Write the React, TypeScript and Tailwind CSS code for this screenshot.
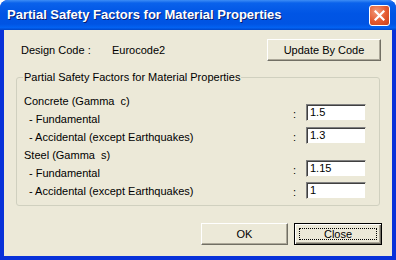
import React from "react";

const face = "font-['Liberation_Sans',Arial,sans-serif]";

function ClassicButton({
  label,
  width,
  isDefault,
}: {
  label: string;
  width: string;
  isDefault?: boolean;
}) {
  if (isDefault) {
    return (
      <button
        className={`${width} h-[22px] border border-black bg-[#ECE9D8] shadow-[inset_1px_1px_0_#fff,inset_-1px_-1px_0_#716F64,inset_-2px_-2px_0_#ACA899] p-[4px] flex`}
      >
        <span className="flex-1 border border-dotted border-black flex items-center justify-center text-[11px] leading-[12px] text-black">
          {label}
        </span>
      </button>
    );
  }
  return (
    <button
      className={`${width} h-[22px] bg-[#ECE9D8] border-t border-l border-white border-r border-b border-r-[#716F64] border-b-[#716F64] shadow-[inset_-1px_-1px_0_#ACA899] flex items-center justify-center text-[11px] leading-[12px] text-black`}
    >
      {label}
    </button>
  );
}

function ValueBox({ value }: { value: string }) {
  return (
    <div className="w-[60px] h-[17px] bg-white border-t border-l border-[#808080] border-r border-b border-r-[#ECE9D8] border-b-[#ECE9D8] shadow-[inset_1px_1px_0_#404040] pl-[3px] text-[11px] leading-[15px] text-black">
      {value}
    </div>
  );
}

function FieldRow({ value, className }: { value: string; className?: string }) {
  return (
    <div className={`flex items-center ${className ?? ""}`}>
      <span className="w-[13px] pt-[3px] text-[11px] leading-[13px] text-black">:</span>
      <ValueBox value={value} />
    </div>
  );
}

export default function App() {
  return (
    <div className={`w-[396px] h-[260px] bg-[#0831D9] rounded-t-[8px] flex flex-col overflow-hidden ${face}`}>
      {/* title bar */}
      <div className="h-[30px] shrink-0 flex items-center justify-between pl-[7px] pr-[6px] bg-[linear-gradient(to_bottom,#3D8DF5_0%,#0A62EB_10%,#0055E5_45%,#0054E3_80%,#0262F2_92%,#0046C8_100%)]">
        <span className="text-white font-bold text-[13px] leading-[16px] [text-shadow:1px_1px_0_#0A1E6E]">
          Partial Safety Factors for Material Properties
        </span>
        <button className="w-[21px] h-[21px] rounded-[3px] border border-white bg-[radial-gradient(circle_at_35%_30%,#F29A7A_0%,#E4592F_55%,#C6401A_100%)] flex items-center justify-center">
          <svg width="11" height="11" viewBox="0 0 11 11">
            <path d="M1.5 1.5 L9.5 9.5 M9.5 1.5 L1.5 9.5" stroke="#fff" strokeWidth="2.2" strokeLinecap="square" />
          </svg>
        </button>
      </div>

      {/* client area */}
      <div className="flex-1 mx-[4px] mb-[4px] bg-[#ECE9D8] flex flex-col pt-[9px] text-black">
        <div className="flex items-center h-[22px] pl-[17px] pr-[11px]">
          <span className="w-[91px] text-[11px] leading-[13px]">Design Code :</span>
          <span className="text-[11px] leading-[13px]">Eurocode2</span>
          <div className="ml-auto">
            <ClassicButton label="Update By Code" width="w-[114px]" />
          </div>
        </div>

        <fieldset className="mx-[12px] mt-[10px] h-[135px] border border-[#D0D0BF] rounded-[3px] px-[6px] pb-[7px]">
          <legend className="px-[1px] text-[11px] leading-[13px]">
            Partial Safety Factors for Material Properties
          </legend>
          <div className="flex">
            <div className="flex-1 flex flex-col pt-[8px] pl-[1px] text-[11px] leading-[18px]">
              <span>Concrete (Gamma&nbsp; c)</span>
              <span className="pl-[5px]">- Fundamental</span>
              <span className="pl-[5px]">- Accidental (except Earthquakes)</span>
              <span>Steel (Gamma&nbsp; s)</span>
              <span className="pl-[5px]">- Fundamental</span>
              <span className="pl-[5px]">- Accidental (except Earthquakes)</span>
            </div>
            <div className="flex flex-col pt-[20px] pr-[7px]">
              <FieldRow value="1.5" />
              <FieldRow value="1.3" className="mt-[6px]" />
              <FieldRow value="1.15" className="mt-[16px]" />
              <FieldRow value="1" className="mt-[5px]" />
            </div>
          </div>
        </fieldset>

        <div className="flex justify-end gap-[6px] pr-[10px] mt-auto mb-[11px]">
          <ClassicButton label="OK" width="w-[87px]" />
          <ClassicButton label="Close" width="w-[88px]" isDefault />
        </div>
      </div>
    </div>
  );
}
